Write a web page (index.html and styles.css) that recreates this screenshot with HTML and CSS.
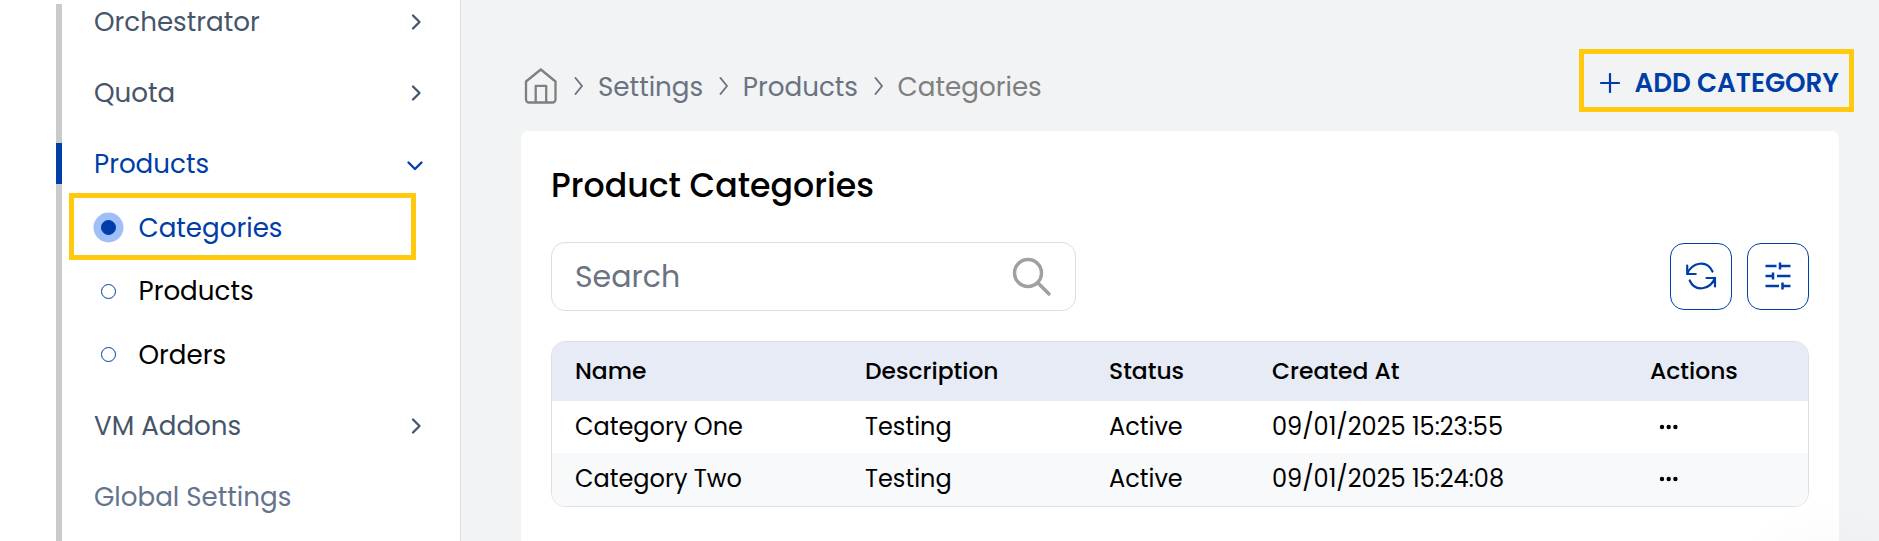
FILE: index.html
```html
<!DOCTYPE html>
<html lang="en">
<head>
<meta charset="utf-8">
<title>Product Categories</title>
<link rel="stylesheet" href="styles.css">
</head>
<body>
<div class="app">
  <aside class="sidebar">
    <div class="track"><div class="track-active"></div></div>
    <nav class="nav">
      <a class="nav-item"><span>Orchestrator</span><svg class="chev" viewBox="0 0 18 18"><path d="M6 2.500 12.500 9l-6.500 6.500"/></svg></a>
      <a class="nav-item"><span>Quota</span><svg class="chev" viewBox="0 0 18 18"><path d="M6 2.500 12.500 9l-6.500 6.500"/></svg></a>
      <a class="nav-item active"><span>Products</span><svg class="chev" viewBox="0 0 18 18"><path d="M1.500 7.500l6.500 6.500L14.500 7.500"/></svg></a>
      <div class="sub">
        <a class="sub-item current"><i class="dot"></i><span>Categories</span></a>
        <a class="sub-item"><i class="dot"></i><span>Products</span></a>
        <a class="sub-item"><i class="dot"></i><span>Orders</span></a>
      </div>
      <a class="nav-item"><span>VM Addons</span><svg class="chev" viewBox="0 0 18 18"><path d="M6 2.500 12.500 9l-6.500 6.500"/></svg></a>
      <a class="nav-item muted"><span>Global Settings</span></a>
    </nav>
    <div class="mark mark-nav"></div>
  </aside>
  <main class="main">
    <header class="top">
      <div class="crumbs">
        <svg class="home" viewBox="0 0 34 38"><path d="M2 14.500 16.800 2.500 31.500 14.500V32.500a3 3 0 0 1-3 3H5a3 3 0 0 1-3-3z"/><path d="M11.700 35V18.800h10.500V35"/></svg>
        <svg class="sep" viewBox="0 0 10 18"><path d="M1.500 1 8 9l-6.500 8"/></svg>
        <span class="crumb">Settings</span>
        <svg class="sep" viewBox="0 0 10 18"><path d="M1.500 1 8 9l-6.500 8"/></svg>
        <span class="crumb">Products</span>
        <svg class="sep" viewBox="0 0 10 18"><path d="M1.500 1 8 9l-6.500 8"/></svg>
        <span class="crumb last">Categories</span>
      </div>
      <a class="add"><svg class="plus" viewBox="0 0 20 20"><path d="M10 1v18M1 10h18"/></svg><span>ADD CATEGORY</span></a>
    </header>
    <section class="card">
      <h1 class="title">Product Categories</h1>
      <div class="tools">
        <div class="search"><span>Search</span><svg class="lens" viewBox="0 0 40 40"><circle cx="16" cy="16" r="13.500"/><path d="M26 26 37 37"/></svg></div>
        <div class="buttons">
          <button class="tool"><svg viewBox="0 0 32 28"><path d="M2.200 3.500v8.500h8.500M2.200 12C7 0 22-2.500 27.500 9.500M30 24.500v-8.500h-8.500M30 16C25 28 10 30.500 4.700 18.500"/></svg></button>
          <button class="tool"><svg class="sliders" viewBox="0 0 32 28"><path d="M3.500 4h11M18.500 4h10M18 .5v7M3.500 14h7M15 14h13.500M11 10.500v7M3.500 24h13.500M21 24h7.500M20.500 20.500v7"/></svg></button>
        </div>
      </div>
      <div class="table">
        <div class="row head"><span>Name</span><span>Description</span><span>Status</span><span>Created At</span><span>Actions</span></div>
        <div class="row"><span>Category One</span><span>Testing</span><span>Active</span><span>09/01/2025 15:23:55</span><svg class="more" viewBox="0 0 20 6"><circle cx="3" cy="3" r="2.200"/><circle cx="9.700" cy="3" r="2.200"/><circle cx="16.400" cy="3" r="2.200"/></svg></div>
        <div class="row even"><span>Category Two</span><span>Testing</span><span>Active</span><span>09/01/2025 15:24:08</span><svg class="more" viewBox="0 0 20 6"><circle cx="3" cy="3" r="2.200"/><circle cx="9.700" cy="3" r="2.200"/><circle cx="16.400" cy="3" r="2.200"/></svg></div>
      </div>
    </section>
    <div class="mark mark-add"></div>
    <div class="glow"></div>
  </main>
</div>
</body>
</html>
```
FILE: styles.css
```css
* { box-sizing: border-box; }
body { margin: 0; background: #fff; font-family: Poppins, Inter, "Open Sans", sans-serif; white-space: nowrap; }
svg { fill: none; stroke: currentColor; stroke-linecap: round; stroke-linejoin: round; flex: none; display: block; }
.app { display: flex; width: 1879px; height: 541px; overflow: hidden; position: relative; }
.sidebar { display: flex; width: 461px; height: 541px; padding-left: 56px; border-right: 1px solid #dcdcdc; flex: none; }
.track { width: 6px; margin-top: 4px; padding-top: 139px; background: #cbcbcb; flex: none; }
.track-active { height: 41px; background: #003da6; }
.nav { flex: 1; margin-top: -14px; padding-left: 32px; }
.nav-item { display: flex; height: 71px; align-items: center; justify-content: space-between; padding-right: 35px; font-size: 26.150px; color: #475569; }
.nav-item span { padding-top: 2px; }
.nav-item.active { color: #003da6; }
.nav-item.muted { color: #64748b; }
.chev { width: 18px; height: 18px; stroke-width: 2.300; }
.sub { margin: -3px 0 3.500px; }
.sub-item { display: flex; height: 63.500px; align-items: center; font-size: 26.150px; color: #000; }
.sub-item span { padding-top: 1px; }
.dot { width: 15px; height: 15px; margin: 0 22.500px 0 7px; border: 1px solid #003da6; border-radius: 50%; }
.current { color: #003da6; }
.current .dot { background: #003da6; box-shadow: 0 0 0 7.500px #9fbffb; }
.mark { position: absolute; border: 5px solid #ffc90e; }
.mark-nav { left: 69px; top: 193px; width: 347px; height: 67px; }
.mark-add { left: 1579px; top: 49px; width: 275px; height: 63px; }
.main { flex: 1; background: #f2f3f5; padding: 0 40px 0 60px; }
.top { display: flex; height: 131px; padding-top: 40px; align-items: center; justify-content: space-between; }
.crumbs { display: flex; align-items: center; padding-left: 3px; font-size: 26.200px; color: #6b7280; }
.home { width: 34px; height: 38px; margin-right: 16px; color: #7f7f7f; stroke-width: 2.300; }
.sep { width: 10px; height: 18px; margin-right: 14px; stroke-width: 1.900; }
.crumb { margin-right: 15.500px; padding-top: 2px; }
.last { color: #7f7f7f; }
.add { display: flex; align-items: center; gap: 14px; margin-top: -5px; font-size: 26.200px; font-weight: 600; color: #003da6; }
.plus { width: 20px; height: 20px; stroke-width: 2.200; }
.card { height: 430px; padding: 33px 30px 0 30px; background: #fff; border-radius: 7px; }
.title { margin: 0; height: 78px; font-size: 33.200px; line-height: 44px; font-weight: 500; color: #000; }
.tools { display: flex; justify-content: space-between; }
.search { display: flex; width: 525px; height: 69px; align-items: center; justify-content: space-between; padding: 0 23px 0 23px; border: 1px solid #dedede; border-radius: 14px; font-size: 30px; color: #6b7280; }
.lens { width: 40px; height: 40px; color: #a0a0a0; stroke-width: 3.500; }
.buttons { display: flex; gap: 15px; padding-top: 1px; }
.tool { display: flex; width: 62px; height: 67px; align-items: center; justify-content: center; padding: 0 0 1px; background: #fff; border: 1px solid #003da6; border-radius: 14px; color: #003da6; }
.tool svg { width: 32px; height: 28px; stroke-width: 2.200; }
.tool .sliders { stroke-width: 2.500; stroke-linecap: butt; }
.table { height: 166px; margin-top: 30px; border: 1px solid #dedfe1; border-radius: 14px; overflow: hidden; }
.row { display: grid; grid-template-columns: 290px 244px 163px 378px 1fr; height: 52px; padding: 0 0 2px 23px; align-items: center; font-size: 24px; color: #000; }
.head { height: 59px; background: #e7ebf5; padding-bottom: 3px; font-size: 23.400px; font-weight: 500; }
.even { height: 54px; padding-bottom: 3px; background: #f8f9fb; }
.more { width: 20px; height: 6px; margin: 1px 0 0 8.500px; fill: #000; stroke: none; }
.glow { position: absolute; left: 1700px; top: 481px; width: 179px; height: 60px; background: radial-gradient(circle 115px at 130px 134px, rgba(0, 0, 0, .035), transparent); pointer-events: none; }
```
